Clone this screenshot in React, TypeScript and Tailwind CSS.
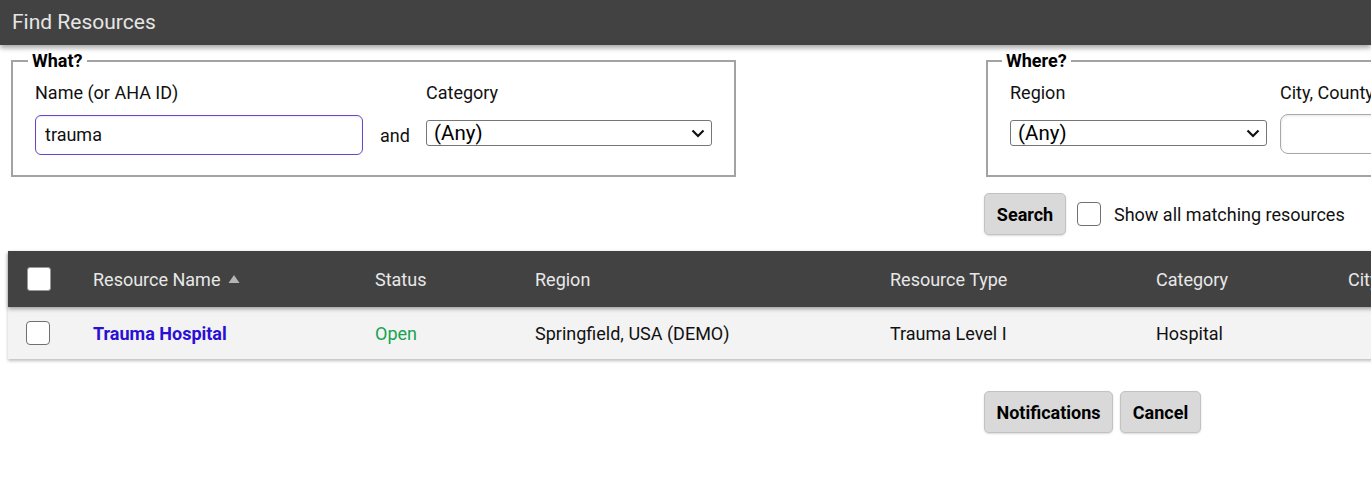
import React from "react";

const columns = [
  { key: "name", label: "Resource Name", width: "w-[282px]", sorted: true },
  { key: "status", label: "Status", width: "w-[160px]" },
  { key: "region", label: "Region", width: "w-[355px]" },
  { key: "type", label: "Resource Type", width: "w-[266px]" },
  { key: "category", label: "Category", width: "w-[192px]" },
  { key: "city", label: "City", width: "w-[200px]" },
];

const rows = [
  {
    id: 1,
    name: "Trauma Hospital",
    status: "Open",
    region: "Springfield, USA (DEMO)",
    type: "Trauma Level I",
    category: "Hospital",
    city: "",
  },
];

function Chevron() {
  return (
    <svg width="14" height="9" viewBox="0 0 14 9" className="shrink-0">
      <path d="M1.5 1.5 L7 7 L12.5 1.5" fill="none" stroke="#111" strokeWidth="2.2" />
    </svg>
  );
}

// looks like a native select
function FakeSelect({ value, width }: { value: string; width: string }) {
  return (
    <div
      className={`${width} h-[26px] flex items-center justify-between border border-[#767676] rounded-[3px] bg-white pl-[7px] pr-[6px] text-[20.5px] leading-none text-black`}
    >
      <span>{value}</span>
      <Chevron />
    </div>
  );
}

function Checkbox({ className = "" }: { className?: string }) {
  return (
    <div
      className={`w-6 h-6 rounded-[4px] border-[1.5px] border-[#707070] bg-white shrink-0 ${className}`}
    />
  );
}

function GrayButton({ children, width }: { children: React.ReactNode; width: string }) {
  return (
    <button
      className={`${width} h-[42px] bg-[#d9d9d9] border border-[#c2c2c2] rounded-[5px] text-[18px] font-bold text-black shadow-[0_1px_2px_rgba(0,0,0,0.15)]`}
    >
      {children}
    </button>
  );
}

export default function App() {
  return (
    <div className="w-[1371px] h-[502px] overflow-hidden bg-white font-['Roboto',sans-serif] text-[18px] text-[#111]">
      <div className="relative z-10 h-[45px] bg-[#424242] pl-3 flex items-center text-[21px] text-[#e6e6e6] shadow-[0_3px_5px_rgba(0,0,0,0.35)]">
        Find Resources
      </div>

      <div className="flex w-[1600px] mt-[5px]">
        {/* What? */}
        <fieldset className="ml-[11px] w-[725px] h-[127px] border-2 border-[#a3a3a3] pl-[15px] pr-4">
          <legend className="px-1 font-bold leading-[22px] text-black">What?</legend>
          <div className="pl-[7px] pt-[9px] grid grid-cols-[328px_63px_286px]">
            <div className="leading-6">Name (or AHA ID)</div>
            <div />
            <div className="leading-6">Category</div>
            <input
              defaultValue="trauma"
              className="mt-[10px] h-10 w-[328px] border border-[#6a45c8] rounded-md px-[9px] pb-0.5 text-[18px] outline-none shadow-[inset_0_1px_2px_rgba(0,0,0,0.08)]"
            />
            <div className="mt-[10px] h-10 flex items-center pl-[17px]">and</div>
            <div className="mt-[15px]">
              <FakeSelect value="(Any)" width="w-[286px]" />
            </div>
          </div>
        </fieldset>

        <div className="ml-[248px] flex flex-col">
          {/* Where? */}
          <fieldset className="ml-[2px] w-[600px] h-[127px] border-2 border-[#a3a3a3] pl-[14px] pr-4">
            <legend className="px-1 font-bold leading-[22px] text-black">Where?</legend>
            <div className="pl-2 pt-[9px] grid grid-cols-[257px_auto] gap-x-[13px]">
              <div className="leading-6">Region</div>
              <div className="leading-6">City, County</div>
              <div className="mt-[15px]">
                <FakeSelect value="(Any)" width="w-[257px]" />
              </div>
              <input className="mt-[9px] h-10 w-[300px] border border-[#a8a8a8] rounded-lg outline-none shadow-[inset_0_1px_3px_rgba(0,0,0,0.1)]" />
            </div>
          </fieldset>

          <div className="mt-4 flex items-center">
            <GrayButton width="w-[82px]">Search</GrayButton>
            <Checkbox className="ml-[11px]" />
            <span className="ml-[13px]">Show all matching resources</span>
          </div>
        </div>
      </div>

      {/* results */}
      <div className="mt-4 ml-2 w-[1600px] shadow-[0_2px_3px_rgba(0,0,0,0.25)]">
        <div className="relative z-10 h-14 bg-[#424242] flex items-center text-[#e8e8e8] shadow-[0_2px_4px_rgba(0,0,0,0.35)]">
          <div className="w-[85px] pl-[19px]">
            <div className="w-6 h-6 rounded-[3px] border border-[#999] bg-white" />
          </div>
          {columns.map((col) => (
            <div key={col.key} className={`${col.width} flex items-center`}>
              {col.label}
              {col.sorted && (
                <svg width="12" height="10" viewBox="0 0 12 10" className="ml-2">
                  <polygon points="6,1 11.5,9 0.5,9" fill="#b5b5b5" />
                </svg>
              )}
            </div>
          ))}
        </div>
        {rows.map((row) => (
          <div key={row.id} className="h-[52px] bg-[#f3f3f3] flex items-center">
            <div className="w-[85px] pl-[18px]">
              <Checkbox />
            </div>
            <div className="w-[282px] font-bold text-[#2a0fd4]">{row.name}</div>
            <div className="w-[160px] text-[#17a34f]">{row.status}</div>
            <div className="w-[355px]">{row.region}</div>
            <div className="w-[266px]">{row.type}</div>
            <div className="w-[192px]">{row.category}</div>
            <div className="w-[200px]">{row.city}</div>
          </div>
        ))}
      </div>

      <div className="mt-8 ml-[984px] flex gap-[7px]">
        <GrayButton width="w-[129px]">Notifications</GrayButton>
        <GrayButton width="w-[81px]">Cancel</GrayButton>
      </div>
    </div>
  );
}
